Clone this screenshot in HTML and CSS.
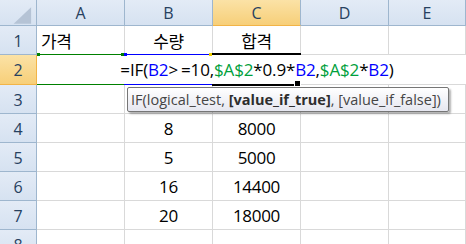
FILE: index.html
```html
<!DOCTYPE html>
<html lang="ko">
<head>
    <meta charset="UTF-8">
    <title>IF 수식</title>
    <link rel="stylesheet" href="styles.css">
</head>
<body>
    <div class="sheet">
        <div class="grid">
            <div class="head corner">
                <svg width="37" height="26" viewBox="0 0 37 26"><polygon points="32,7 32,24 14,24" fill="#b5c3d5"/></svg>
            </div>
            <div class="head">A</div>
            <div class="head">B</div>
            <div class="head on">C</div>
            <div class="head">D</div>
            <div class="head">E</div>

            <div class="head row">1</div>
            <div class="cell left">가격</div>
            <div class="cell">수량</div>
            <div class="cell">합격</div>
            <div class="cell"></div>
            <div class="cell"></div>

            <div class="head row on">2</div>
            <div class="cell"></div>
            <div class="cell"></div>
            <div class="cell"></div>
            <div class="cell"></div>
            <div class="cell"></div>

            <div class="head row">3</div>
            <div class="cell"></div>
            <div class="cell"></div>
            <div class="cell"></div>
            <div class="cell"></div>
            <div class="cell"></div>

            <div class="head row">4</div>
            <div class="cell"></div>
            <div class="cell">8</div>
            <div class="cell">8000</div>
            <div class="cell"></div>
            <div class="cell"></div>

            <div class="head row">5</div>
            <div class="cell"></div>
            <div class="cell">5</div>
            <div class="cell">5000</div>
            <div class="cell"></div>
            <div class="cell"></div>

            <div class="head row">6</div>
            <div class="cell"></div>
            <div class="cell">16</div>
            <div class="cell">14400</div>
            <div class="cell"></div>
            <div class="cell"></div>

            <div class="head row">7</div>
            <div class="cell"></div>
            <div class="cell">20</div>
            <div class="cell">18000</div>
            <div class="cell"></div>
            <div class="cell"></div>

            <div class="head row">8</div>
            <div class="cell"></div>
            <div class="cell"></div>
            <div class="cell"></div>
            <div class="cell"></div>
            <div class="cell"></div>
        </div>

        <!-- in-cell editor for C2 -->
        <div class="editor">=IF(<span class="blue">B2</span><span class="gt">&gt;</span>=10,<span class="green">$A$2</span>*0.9*<span class="blue">B2</span>,<span class="green">$A$2</span>*<span class="blue">B2</span>)</div>

        <!-- range finder outlines -->
        <div class="refs">
            <div class="ref ref-green"><i class="dot l"></i><i class="dot r"></i></div>
            <div class="ref ref-blue"><i class="dot l"></i><i class="dot r yellow"></i></div>
            <div class="ref active"><i class="handle"></i></div>
        </div>

        <div class="tip">IF(logical_test, <b>[value_if_true]</b>, [value_if_false])</div>
    </div>
</body>
</html>
```

FILE: styles.css
```css
body {
    margin: 0;
    background: #fff;
    font-family: 'Open Sans', 'Noto Sans CJK KR', sans-serif;
}

.sheet {
    position: relative;
    width: 466px;
    height: 244px;
    overflow: hidden;
}

.grid {
    display: grid;
    grid-template-columns: 37px repeat(4, 88px) 1fr;
    grid-template-rows: 26px 29px 30px repeat(6, 29px);
}

.grid > div {
    box-sizing: border-box;
    border-right: 1px solid #d9d9d9;
    border-bottom: 1px solid #d9d9d9;
    display: flex;
    align-items: center;
    justify-content: center;
}

.cell {
    font-size: 17px;
    color: #000;
    letter-spacing: -0.3px;
}

.cell.left {
    justify-content: flex-start;
    padding-left: 4px;
}

.head {
    background: linear-gradient(#e3ebf6, #d6e2f1);
    color: #27415f;
    font-size: 16px;
    border-color: #9eb6ce !important;
}

.head.row {
    padding-top: 1px;
}

.head.on {
    background: linear-gradient(#fbe2a6, #f7cf79);
    border-bottom-color: #f2b447 !important;
}

.head.row.on {
    border-right-color: #f2b447 !important;
}

.corner {
    padding: 0;
}

.editor {
    position: absolute;
    top: 55px;
    left: 37px;
    width: 440px;
    height: 29px;
    background: #fff;
    display: flex;
    align-items: center;
    justify-content: center;
    font-size: 17px;
    color: #000;
    white-space: pre;
    letter-spacing: -0.15px;
}

.blue {
    color: #0000ff;
}

.green {
    color: #00a03c;
}

.gt {
    margin-right: 3px;
}

.refs {
    position: absolute;
    top: 54px;
    left: 37px;
    display: flex;
    align-items: flex-start;
}

.ref {
    position: relative;
    box-sizing: border-box;
    height: 31px;
    width: 87px;
}

.ref-green {
    border-top: 1px solid #008000;
    border-bottom: 1px solid #008000;
}

.ref-blue {
    width: 88px;
    border-top: 1px solid #0000ff;
    border-bottom: 1px solid #0000ff;
}

.dot {
    position: absolute;
    width: 3px;
    height: 3px;
    top: -2px;
}

.ref-green .dot {
    background: #008000;
}

.ref-blue .dot {
    background: #0000ff;
}

.dot.l {
    left: 0;
}

.dot.r {
    right: 0;
}

.ref-blue .dot.yellow {
    background: #f0d000;
}

.active {
    width: 89px;
    height: 33px;
    margin-top: -1px;
    border-top: 2px solid #000;
    border-bottom: 2px solid #000;
}

.handle {
    position: absolute;
    right: 0;
    bottom: -3px;
    width: 5px;
    height: 5px;
    background: #000;
    border: 1px solid #fff;
}

.tip {
    position: absolute;
    left: 127px;
    top: 87px;
    width: 322px;
    height: 25px;
    box-sizing: border-box;
    padding-left: 3px;
    display: flex;
    align-items: center;
    border: 1px solid #767676;
    border-radius: 2px;
    background: linear-gradient(#ffffff, #e6e7f0);
    box-shadow: 2px 2px 2px rgba(0, 0, 0, 0.3);
    font-size: 14.5px;
    color: #454545;
    white-space: pre;
}

.tip b {
    color: #2e2e2e;
}
```
